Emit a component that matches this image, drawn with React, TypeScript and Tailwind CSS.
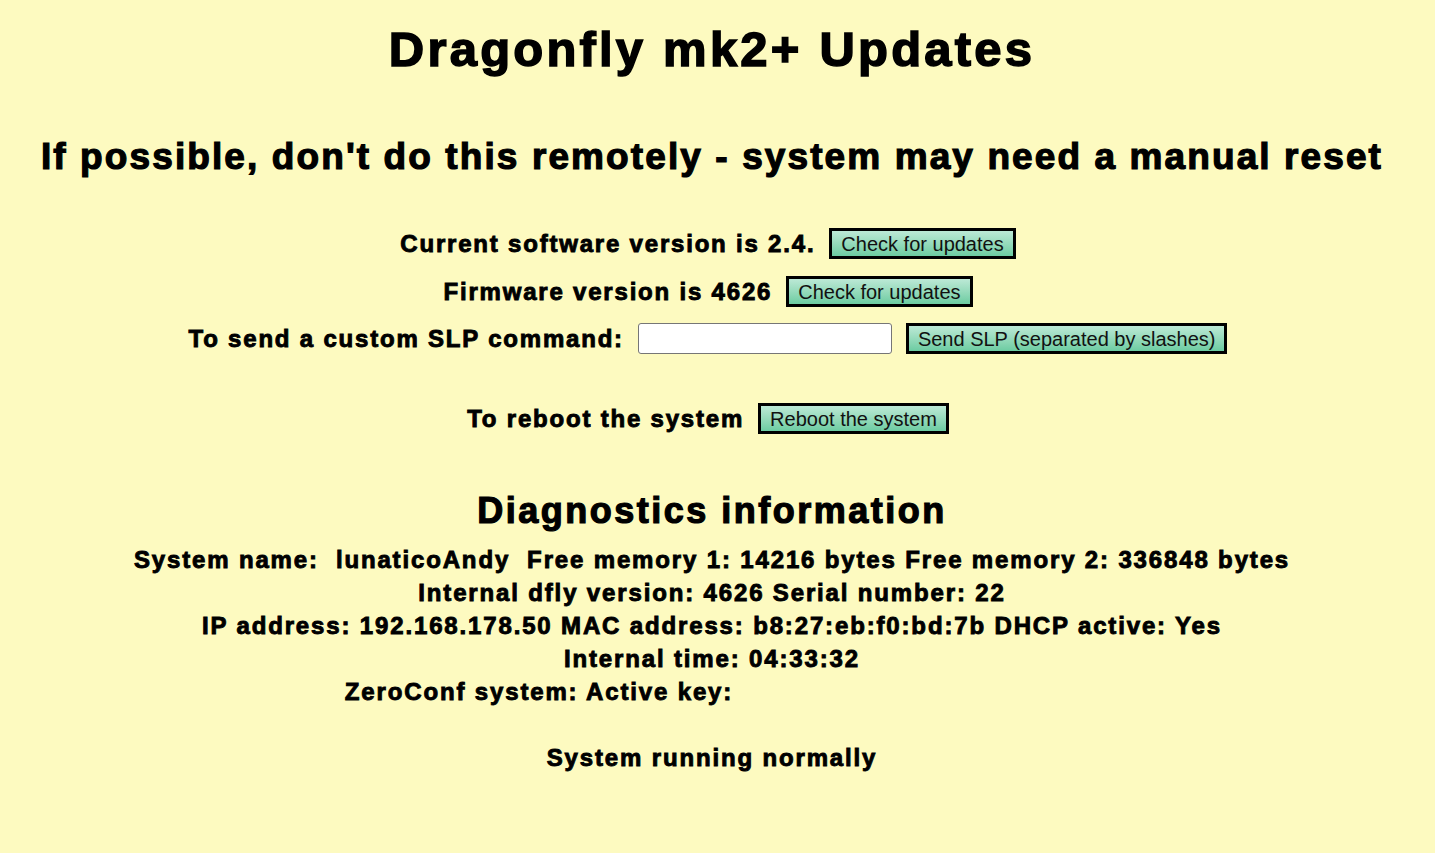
const bold = "font-['Liberation_Sans',Arial,sans-serif] font-bold text-black";

function GreenButton({ label }: { label: string }) {
  return (
    <button
      type="button"
      className="h-[31px] px-[9px] border-[3px] border-black bg-gradient-to-b from-[#bce9d6] to-[#6ccca2] text-[20px] leading-none text-[#111] font-['Liberation_Sans',Arial,sans-serif]"
    >
      {label}
    </button>
  );
}

function Row({ label, children, className }: { label: string; children: React.ReactNode; className: string }) {
  return (
    <div className={`flex items-center justify-center gap-[14px] h-[31px] pr-[8px] ${className}`}>
      <span className={`${bold} text-[24px] tracking-[1.8px] [-webkit-text-stroke:0.9px_black]`}>{label}</span>
      {children}
    </div>
  );
}

export default function App() {
  const diag = [
    'System name:\u00a0 lunaticoAndy\u00a0 Free memory 1: 14216 bytes Free memory 2: 336848 bytes',
    'Internal dfly version: 4626 Serial number: 22',
    'IP address: 192.168.178.50 MAC address: b8:27:eb:f0:bd:7b DHCP active: Yes',
    'Internal time: 04:33:32',
  ];
  const diagText = `${bold} text-[24px] leading-[33px] tracking-[1.85px] [-webkit-text-stroke:0.9px_black]`;

  return (
    <div className="min-h-screen bg-[#fdfac0] flex flex-col items-center pt-[21px] pr-[11px]">
      <h1 className={`${bold} text-[49px] leading-[56px] tracking-[3.2px] [-webkit-text-stroke:1.5px_black]`}>
        Dragonfly mk2+ Updates
      </h1>
      <h2 className={`${bold} text-[37px] leading-[44px] tracking-[2.1px] mt-[58px] [-webkit-text-stroke:1.2px_black]`}>
        If possible, don't do this remotely - system may need a manual reset
      </h2>

      <Row label="Current software version is 2.4." className="mt-[49px]">
        <GreenButton label="Check for updates" />
      </Row>
      <Row label="Firmware version is 4626" className="mt-[17px]">
        <GreenButton label="Check for updates" />
      </Row>
      <Row label="To send a custom SLP command:" className="mt-[16px]">
        <input
          type="text"
          className="w-[254px] h-[31px] bg-white border border-[#767676] rounded-[3px] px-1 text-[18px]"
        />
        <GreenButton label="Send SLP (separated by slashes)" />
      </Row>
      <Row label="To reboot the system" className="mt-[49px]">
        <GreenButton label="Reboot the system" />
      </Row>

      <h2 className={`${bold} text-[36px] leading-[44px] tracking-[2.5px] mt-[55px] [-webkit-text-stroke:1.2px_black]`}>
        Diagnostics information
      </h2>

      <div className="mt-[10px] flex flex-col items-center">
        {diag.map((line) => (
          <p key={line} className={`${diagText} whitespace-pre`}>
            {line}
          </p>
        ))}
        <p className={diagText}>
          ZeroConf system: Active key:
          <span className="inline-block w-[346px]" />
        </p>
        <p className={`${diagText} mt-[33px]`}>System running normally</p>
      </div>
    </div>
  );
}
